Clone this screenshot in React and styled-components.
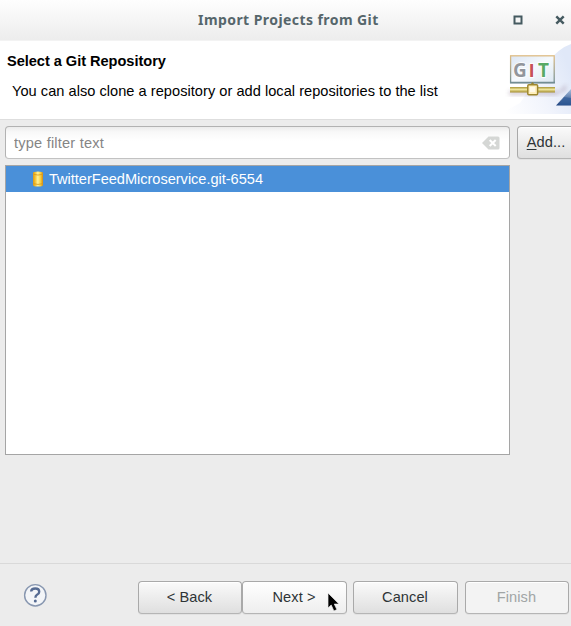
import React from "react";
import styled, { createGlobalStyle } from "styled-components";

const GlobalStyle = createGlobalStyle`
  * { box-sizing: border-box; }
  html, body { margin: 0; padding: 0; overflow: hidden; background: #ececec; }
  button, input { font: inherit; }
`;

const Dialog = styled.div`
  width: 571px;
  height: 626px;
  overflow: hidden;
  display: flex;
  flex-direction: column;
  background: #ececec;
  color: #000;
  font: 15px/18px "Liberation Sans", Arial, sans-serif;
`;

const TitleBar = styled.header`
  height: 41px;
  flex: none;
  display: grid;
  grid-template-columns: 198px 1fr auto;
  align-items: center;
  background: linear-gradient(#fefefe, #ededed 39px);
  border-bottom: 1px solid #f3f3f3;
`;

const Title = styled.h1`
  grid-column: 2;
  margin: 0;
  font: 700 14px/20px "Noto Sans", sans-serif;
  letter-spacing: 0.43px;
  white-space: nowrap;
  color: #56666b;
`;

const WindowControls = styled.div`
  display: flex;
  gap: 32px;
  padding-right: 6px;
  svg { display: block; }
`;

const Banner = styled.section`
  height: 79px;
  flex: none;
  display: flex;
  justify-content: space-between;
  background: #fff;
  border-bottom: 1px solid #dedede;
`;

const BannerText = styled.div`
  padding: 11px 0 0 7px;
  white-space: nowrap;
`;

const Heading = styled.h2`
  margin: 0;
  font-size: 14.6px;
  line-height: 18px;
  font-weight: 700;
  letter-spacing: -0.04px;
`;

const Description = styled.p`
  margin: 12px 0 0 5px;
  font-size: 14.6px;
  line-height: 18px;
  letter-spacing: 0.03px;
`;

const Content = styled.main`
  flex: 1;
  padding: 6px 0 0 5px;
  display: grid;
  grid-template-columns: 505px 55px;
  grid-template-rows: 33px 290px;
  gap: 6px 7px;
  border-bottom: 1px solid #d9d9d9;
`;

const Filter = styled.label`
  display: flex;
  align-items: center;
  padding: 0 9px 0 8px;
  border: 1px solid #b2b2b2;
  border-bottom-color: #c2c2c2;
  border-radius: 4px;
  background: linear-gradient(#ececec, #f8f8f8 5px, #fff 14px);
`;

const FilterInput = styled.input`
  flex: 1;
  min-width: 0;
  padding: 0;
  border: 0;
  outline: 0;
  background: transparent;
  font-size: 14.6px;
  letter-spacing: 0.2px;
  &::placeholder { color: #858585; opacity: 1; }
`;

const Button = styled.button`
  width: ${(p) => p.$width || 105}px;
  height: 33px;
  flex: none;
  padding: 0 1px 1px 0;
  border: 1px solid #a9a9a9;
  border-bottom-color: #b5b5b5;
  border-radius: 4px;
  background: ${(p) =>
    p.disabled
      ? "#f3f3f3"
      : p.$hover
        ? "linear-gradient(#ffffff, #eeeeee)"
        : "linear-gradient(#fafafa, #dfdfdf)"};
  box-shadow: inset 0 1px #fff, 0 1px #e2e2e2;
  color: ${(p) => (p.disabled ? "#a1a5a5" : "#2e3436")};
  font-size: 14.6px;
  line-height: 18px;
  letter-spacing: 0.08px;
  white-space: nowrap;
`;

const Mnemonic = styled.span`
  text-decoration: underline;
  text-underline-offset: 2px;
`;

const RepositoryList = styled.ul`
  margin: 0;
  padding: 0;
  list-style: none;
  background: #fff;
  border: 1px solid #a5a5a5;
`;

const Repository = styled.li`
  height: 26px;
  display: flex;
  align-items: center;
  gap: 5px;
  padding-left: 26px;
  background: #4a90d9;
  color: #fff;
  font-size: 14.6px;
  letter-spacing: -0.03px;
`;

const Footer = styled.footer`
  position: relative;
  height: 62px;
  flex: none;
  display: flex;
  padding: 17px 0 0 23px;
`;

const HelpIcon = styled.svg`
  flex: none;
  margin: 2px 91px 0 0;
`;

const ButtonGroup = styled.div`
  display: flex;
  margin-right: ${(p) => p.$gap || 0}px;
`;

const Pointer = styled.svg`
  position: absolute;
  left: 327px;
  top: 28px;
`;

function GitBanner() {
  return (
    <svg width="71" height="78" viewBox="0 0 71 78">
      <defs>
        <linearGradient id="haze" x1="0" y1="0.8" x2="1" y2="0.4">
          <stop offset="0" stopColor="#fff" />
          <stop offset=".55" stopColor="#f1f4fc" />
          <stop offset="1" stopColor="#e0e8f8" />
        </linearGradient>
        <linearGradient id="panel" x1="0" y1="0" x2="1" y2="1">
          <stop offset="0" stopColor="#dce6f4" />
          <stop offset=".5" stopColor="#f5f9fd" />
          <stop offset="1" stopColor="#dde8f2" />
        </linearGradient>
        <linearGradient id="frame" x1="0" y1="0" x2="0" y2="1">
          <stop offset="0" stopColor="#dfbd85" />
          <stop offset="1" stopColor="#738f95" />
        </linearGradient>
        <linearGradient id="pyramid" x1="0" y1="0" x2="0" y2="1">
          <stop offset="0" stopColor="#a9c1df" />
          <stop offset="1" stopColor="#1d4380" />
        </linearGradient>
        <linearGradient id="pipe" x1="0" y1="0" x2="0" y2="1">
          <stop offset="0" stopColor="#a89537" />
          <stop offset=".45" stopColor="#efe59b" />
          <stop offset="1" stopColor="#a28b2d" />
        </linearGradient>
        <filter id="soft"><feGaussianBlur stdDeviation="2" /></filter>
      </defs>
      <path d="M0 73 L20 62 L47 22 Q59 7 71 3 V73Z" fill="url(#haze)" />
      <path d="M9 50 H60 L66 43 V49 L56 54 H9Z" fill="#8f7891" opacity=".4" filter="url(#soft)" />
      <path d="M56 64.5 L71 48 V64.5Z" fill="url(#pyramid)" />
      <path d="M64 56 L71 57 V64 H59Z" fill="#315d99" opacity=".7" />
      <rect x="10.6" y="14.8" width="43.6" height="27" fill="url(#panel)" stroke="url(#frame)" strokeWidth="1.3" />
      <path d="M10 41.6 H55" stroke="#738d93" strokeWidth="1.5" />
      <g fontFamily="Noto Sans, sans-serif" fontSize="19" fontWeight="700" stroke="#fff" strokeWidth="1.6" paintOrder="stroke">
        <text x="13" y="35.5" fill="#92969c">G</text>
        <text x="29" y="35.5" fill="#c55258" fontFamily="Liberation Sans, sans-serif">I</text>
        <text x="38" y="35.5" fill="#58aa66">T</text>
      </g>
      <rect x="10" y="46" width="45" height="5.5" fill="url(#pipe)" />
      <path d="M29 45 L32.5 41 L36 45Z" fill="#958438" />
      <rect x="27.8" y="43.8" width="9.8" height="10" rx="1" fill="#ffefbd" stroke="#9e872d" strokeWidth="1.5" />
      <rect x="30" y="46" width="5" height="5" fill="#fff9e8" />
    </svg>
  );
}

function Help() {
  return (
    <HelpIcon width="24" height="24" viewBox="0 0 24 24">
      <circle cx="12.3" cy="12.3" r="10.7" fill="#f3f5f8" stroke="#8897b0" strokeWidth="1.4" />
      <path d="M8.1 8.5 Q8.4 5.5 12.2 5.5 Q16.2 5.5 16.2 8.7 Q16.2 10.7 14 11.8 Q12.4 12.7 12.4 14.8" fill="none" stroke="#566b92" strokeWidth="2.4" />
      <circle cx="12.3" cy="18.1" r="1.5" fill="#566b92" />
    </HelpIcon>
  );
}

export default function App() {
  return (
    <>
      <GlobalStyle />
      <Dialog>
        <TitleBar>
          <Title>Import Projects from Git</Title>
          <WindowControls>
            <svg width="10" height="10" viewBox="0 0 10 10"><path d="M1.5 1.5h7v7h-7z" fill="none" stroke="#455a60" strokeWidth="2" /></svg>
            <svg width="10" height="10" viewBox="0 0 10 10"><path d="m1.3 1.3 7.4 7.4m0-7.4-7.4 7.4" stroke="#455a60" strokeWidth="2.4" /></svg>
          </WindowControls>
        </TitleBar>
        <Banner>
          <BannerText>
            <Heading>Select a Git Repository</Heading>
            <Description>You can also clone a repository or add local repositories to the list</Description>
          </BannerText>
          <GitBanner />
        </Banner>
        <Content>
          <Filter>
            <FilterInput placeholder="type filter text" />
            <svg width="18" height="14" viewBox="0 0 18 14">
              <path d="M0 7 6.5.5H16a1.5 1.5 0 0 1 1.5 1.5v10a1.5 1.5 0 0 1-1.5 1.5H6.5Z" fill="#d5d7d5" />
              <path d="m7.7 4 6 6m0-6-6 6" stroke="#fff" strokeWidth="2" />
            </svg>
          </Filter>
          <Button $width={59}><Mnemonic>A</Mnemonic>dd...</Button>
          <RepositoryList>
            <Repository>
              <svg width="12" height="16" viewBox="0 0 12 16">
                <defs>
                  <linearGradient id="gold"><stop stopColor="#d99a1e" /><stop offset=".2" stopColor="#f4bd29" /><stop offset=".48" stopColor="#fff39a" /><stop offset=".75" stopColor="#f8cf3d" /><stop offset="1" stopColor="#d18a14" /></linearGradient>
                </defs>
                <path d="M1 2Q1 .5 6 .5T11 2V14Q11 15.5 6 15.5T1 14Z" fill="url(#gold)" />
                <path d="M1.5 3.3Q6 4.8 10.5 3.3M1.5 12.7Q6 14.2 10.5 12.7" fill="none" stroke="#d8951c" strokeWidth=".8" />
              </svg>
              TwitterFeedMicroservice.git-6554
            </Repository>
          </RepositoryList>
        </Content>
        <Footer>
          <Help />
          <ButtonGroup $gap={6}>
            <Button $width={104}>&lt; Back</Button>
            <Button $hover>Next &gt;</Button>
          </ButtonGroup>
          <ButtonGroup $gap={7}><Button>Cancel</Button></ButtonGroup>
          <Button $width={104} disabled>Finish</Button>
          <Pointer width="14" height="21" viewBox="0 0 14 21">
            <path d="M1 1v15l3.2-3 2.7 6 3-1.4-2.6-5.5H12Z" fill="#000" stroke="#eee" strokeWidth=".7" />
          </Pointer>
        </Footer>
      </Dialog>
    </>
  );
}
